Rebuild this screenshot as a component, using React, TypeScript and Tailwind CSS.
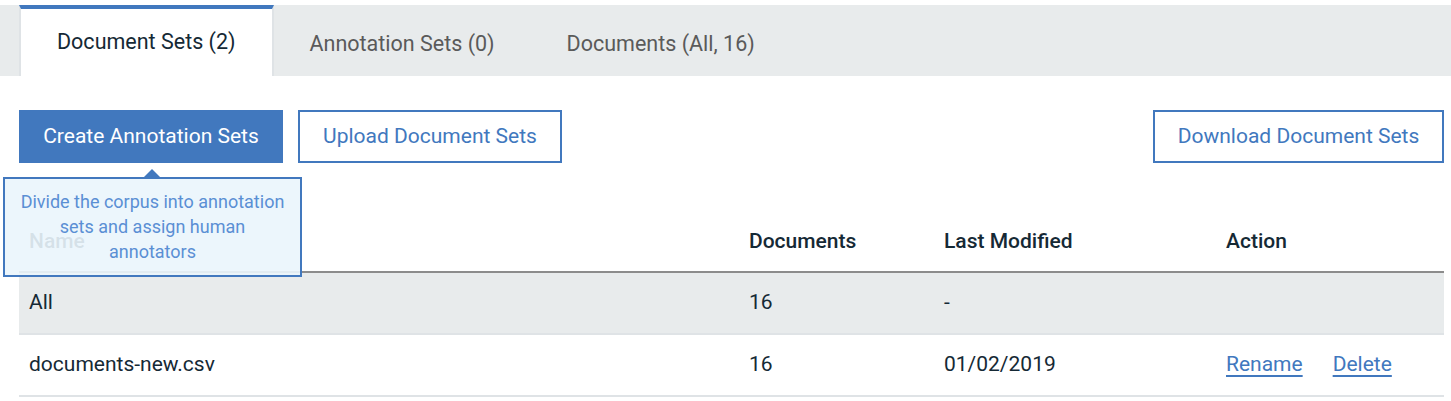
import { useState } from 'react';

type Tab = { label: string };

const tabs: Tab[] = [
  { label: 'Document Sets (2)' },
  { label: 'Annotation Sets (0)' },
  { label: 'Documents (All, 16)' },
];

type DocSet = { name: string; count: number; modified: string; actions: boolean };

const rows: DocSet[] = [
  { name: 'All', count: 16, modified: '-', actions: false },
  { name: 'documents-new.csv', count: 16, modified: '01/02/2019', actions: true },
];

const cols = 'grid grid-cols-[720px_195px_282px_1fr]';

export default function App() {
  const [active, setActive] = useState(0);

  return (
    <div className="min-h-[401px] bg-white pt-[5px] font-['Roboto',sans-serif] text-[#152935]">
      <div className="flex h-[71px] bg-[#e8ebec] pl-[19px]">
        {tabs.map((tab, i) => (
          <button
            key={tab.label}
            onClick={() => setActive(i)}
            className={
              i === active
                ? 'h-full border-x-2 border-t-4 border-x-[#dfe3e6] border-t-[#4178be] bg-white px-[36px] text-[21.5px] text-[#152935]'
                : 'h-full px-[36px] pt-[7px] text-[21.5px] text-[#5a5a5a]'
            }
          >
            {tab.label}
          </button>
        ))}
      </div>

      <div className="flex items-start pl-[19px] pr-[7px] pt-[34px]">
        <div className="relative">
          <button className="h-[53px] w-[264px] bg-[#4178be] text-[21px] text-white">Create Annotation Sets</button>
          {/* hint popover under the primary action */}
          <div className="absolute left-[-16px] top-[67px] z-10 w-[299px]">
            <div className="absolute left-[141px] top-[-8px] h-0 w-0 border-x-[8px] border-b-[8px] border-x-transparent border-b-[#4178be]" />
            <div className="h-[100px] border-2 border-[#4178be] bg-[#eaf5fc]/90 pt-[10px] text-center text-[18px] leading-[25px] text-[#5a8fd4]">
              Divide the corpus into annotation
              <br />
              sets and assign human
              <br />
              annotators
            </div>
          </div>
        </div>
        <button className="ml-[15px] h-[53px] w-[264px] border-2 border-[#4178be] text-[21px] text-[#4178be]">
          Upload Document Sets
        </button>
        <button className="ml-auto h-[53px] w-[291px] border-2 border-[#4178be] text-[21px] text-[#4178be]">
          Download Document Sets
        </button>
      </div>

      <div className="ml-[19px] mr-[7px] mt-[49px]">
        <div className={`${cols} h-[61px] items-center border-b-2 border-[#8c8c8c] text-[21px] font-medium`}>
          <div className="pl-[10px]">Name</div>
          <div className="pl-[10px]">Documents</div>
          <div className="pl-[10px]">Last Modified</div>
          <div className="pl-[10px]">Action</div>
        </div>
        {rows.map((row, i) => (
          <div
            key={row.name}
            className={`${cols} h-[62px] items-center border-b-2 border-[#dfe3e6] text-[21px] ${i === 0 ? 'bg-[#e8ebec]' : 'bg-white'}`}
          >
            <div className="pl-[10px]">{row.name}</div>
            <div className="pl-[10px]">{row.count}</div>
            <div className="pl-[10px]">{row.modified}</div>
            <div className="flex gap-[30px] pl-[10px]">
              {row.actions && (
                <>
                  <a className="cursor-pointer text-[#4178be] underline decoration-2 underline-offset-[4px]">Rename</a>
                  <a className="cursor-pointer text-[#4178be] underline decoration-2 underline-offset-[4px]">Delete</a>
                </>
              )}
            </div>
          </div>
        ))}
      </div>
    </div>
  );
}
